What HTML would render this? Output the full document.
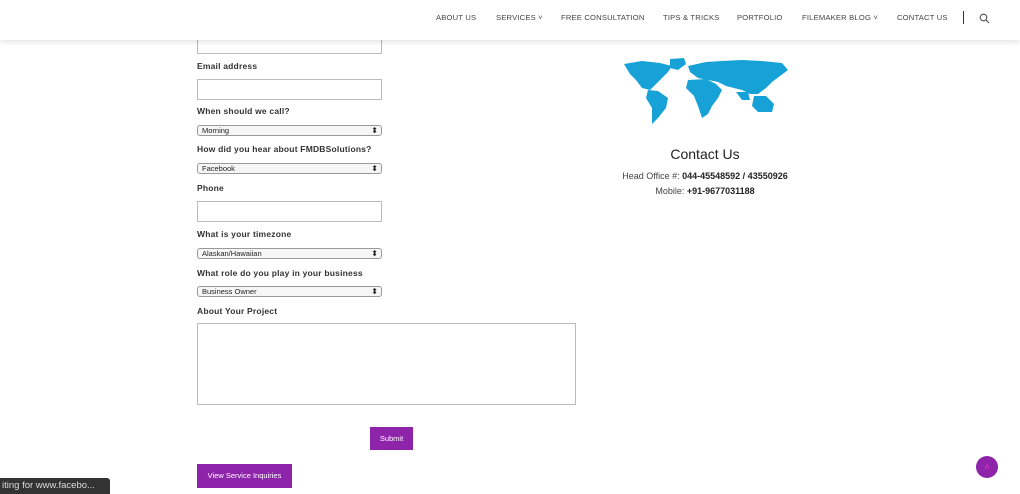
<!DOCTYPE html>
<html><head><style>
*{margin:0;padding:0;box-sizing:border-box}
body{width:1020px;height:494px;background:#fff;position:relative;overflow:hidden;font-family:"Liberation Sans",sans-serif}
.hdr{position:absolute;left:0;top:0;width:1020px;height:40px;background:#fff;box-shadow:0 2px 6px rgba(0,0,0,.12);z-index:5}
.nav{position:absolute;top:13px;font-size:7.6px;color:#444;letter-spacing:.2px;white-space:nowrap}
.lbl{position:absolute;left:197px;font-size:8.5px;font-weight:bold;color:#333;letter-spacing:.2px}
.in{position:absolute;left:197px;width:185px;border:1px solid #bbb;background:#fff}
.sel{position:absolute;left:197px;width:185px;height:11px;border:1px solid #999;border-radius:3px;background:#f6f6f6;font-size:7.5px;color:#222;padding-left:4px;line-height:9px}
.sel:after{content:"⬍";position:absolute;right:3px;top:0;font-size:8px}
.btn{position:absolute;background:#8e24aa;color:#fff;font-size:7.5px;text-align:center}
</style></head><body>
<div class="hdr">
<span class="nav" style="left:436px">ABOUT US</span>
<span class="nav" style="left:496px">SERVICES ˅</span>
<span class="nav" style="left:561px">FREE CONSULTATION</span>
<span class="nav" style="left:663px">TIPS &amp; TRICKS</span>
<span class="nav" style="left:737px">PORTFOLIO</span>
<span class="nav" style="left:802px">FILEMAKER BLOG ˅</span>
<span class="nav" style="left:897px">CONTACT US</span>
<div style="position:absolute;left:963px;top:11px;width:1px;height:13px;background:#333"></div>
<svg style="position:absolute;left:979px;top:13px" width="11" height="11" viewBox="0 0 11 11"><circle cx="4.5" cy="4.5" r="3.3" fill="none" stroke="#555" stroke-width="1.1"/><path d="M7 7l3 3" stroke="#555" stroke-width="1.2"/></svg>
</div>
<div class="in" style="top:35px;height:19px"></div>
<div class="lbl" style="top:61px">Email address</div>
<div class="in" style="top:79px;height:21px"></div>
<div class="lbl" style="top:106px">When should we call?</div>
<div class="sel" style="top:125px">Morning</div>
<div class="lbl" style="top:144px">How did you hear about FMDBSolutions?</div>
<div class="sel" style="top:163px">Facebook</div>
<div class="lbl" style="top:183px">Phone</div>
<div class="in" style="top:201px;height:21px"></div>
<div class="lbl" style="top:229px">What is your timezone</div>
<div class="sel" style="top:248px">Alaskan/Hawaiian</div>
<div class="lbl" style="top:268px">What role do you play in your business</div>
<div class="sel" style="top:286px">Business Owner</div>
<div class="lbl" style="top:306px">About Your Project</div>
<div class="in" style="top:323px;height:82px;width:379px"></div>
<div class="btn" style="left:370px;top:427px;width:43px;height:23px;line-height:23px">Submit</div>
<div class="btn" style="left:197px;top:464px;width:95px;height:24px;line-height:24px">View Service Inquiries</div>
<div style="position:absolute;left:0;top:478px;width:110px;height:16px;background:#333;color:#ddd;font-size:9.5px;line-height:16px;padding-left:2px;border-radius:0 3px 0 0">iting for www.facebo...</div>
<div style="position:absolute;left:976px;top:456px;width:22px;height:22px;border-radius:50%;background:#8e24aa;color:#f3c;text-align:center;font-size:9px;line-height:22px">˄</div>
<svg style="position:absolute;left:622px;top:58px" width="170" height="72" viewBox="0 0 170 72" fill="#16a2d6">
<path d="M2 6 L20 3 L38 5 L50 8 L46 14 L40 20 L34 26 L28 32 L20 30 L14 22 L8 16 Z"/>
<path d="M48 1 L62 0 L64 6 L56 12 L48 10 Z"/>
<path d="M26 32 L36 33 L46 40 L44 50 L36 60 L30 66 L30 50 L24 40 Z"/>
<path d="M66 8 L84 4 L100 3 L120 2 L140 3 L160 5 L166 12 L158 18 L150 24 L144 30 L136 36 L128 36 L120 32 L112 30 L104 28 L96 24 L86 22 L76 20 L68 14 Z"/>
<path d="M66 22 L84 21 L94 26 L100 32 L96 40 L90 48 L86 56 L80 60 L76 48 L72 38 L64 30 Z"/>
<path d="M132 38 L144 38 L152 46 L150 54 L136 54 L130 48 Z"/>
<path d="M114 34 L126 34 L128 42 L120 42 Z"/>
</svg>
<div style="position:absolute;left:600px;top:146px;width:210px;text-align:center;font-size:14px;color:#222">Contact Us</div>
<div style="position:absolute;left:600px;top:171px;width:210px;text-align:center;font-size:9px;color:#444">Head Office #: <b style="color:#222">044-45548592 / 43550926</b></div>
<div style="position:absolute;left:600px;top:186px;width:210px;text-align:center;font-size:9px;color:#444">Mobile: <b style="color:#222">+91-9677031188</b></div>
</body></html>
